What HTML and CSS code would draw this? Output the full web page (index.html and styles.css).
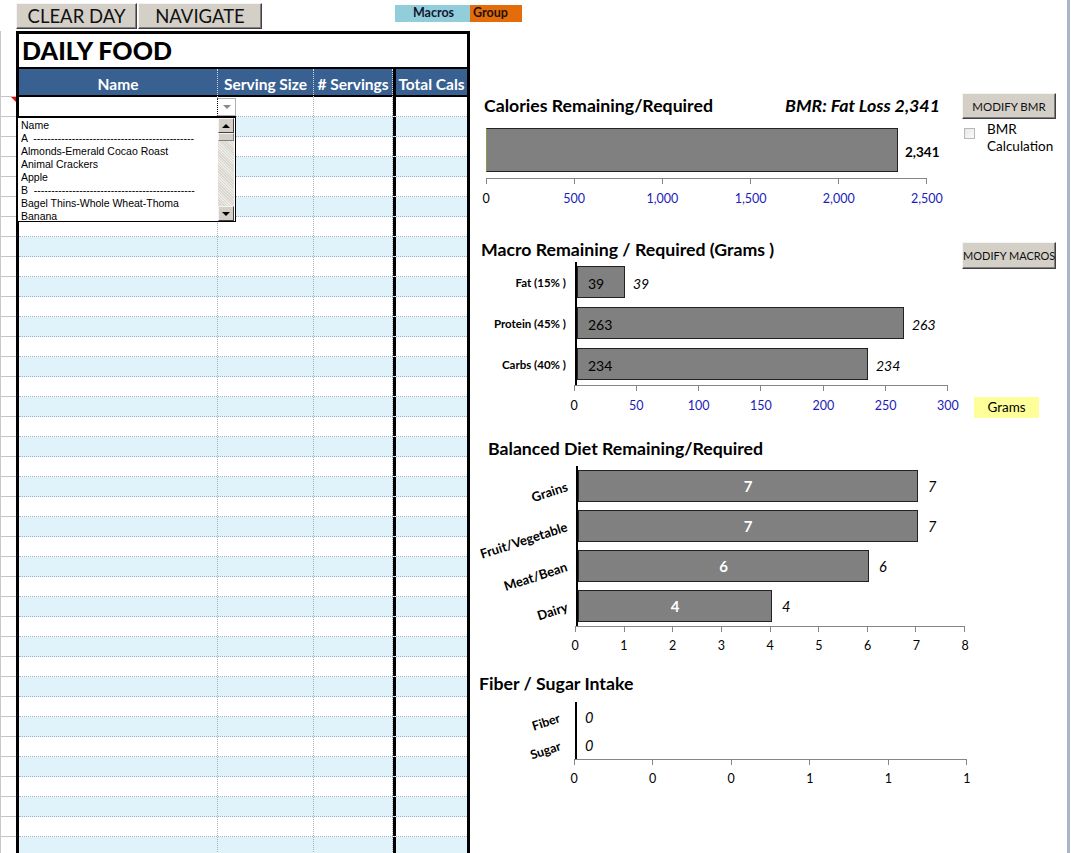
FILE: index.html
```html
<!DOCTYPE html>
<html>
<head>
<meta charset="utf-8">
<title>Daily Food</title>
<link rel="stylesheet" href="styles.css">
</head>
<body>
<div class="sheet">
  <div class="toolbar">
    <button class="xbtn btn-clear">CLEAR DAY</button>
    <button class="xbtn btn-nav">NAVIGATE</button>
    <div class="tags"><span class="tag tag-macros">Macros</span><span class="tag tag-group">Group</span></div>
  </div>
  <div class="main">
    <div class="left">
      <div class="gutter">
        <div class="g g-first"></div><div class="g"></div><div class="g"></div><div class="g"></div><div class="g"></div><div class="g"></div><div class="g"></div><div class="g"></div><div class="g"></div><div class="g"></div>
        <div class="g"></div><div class="g"></div><div class="g"></div><div class="g"></div><div class="g"></div><div class="g"></div><div class="g"></div><div class="g"></div><div class="g"></div><div class="g"></div>
        <div class="g"></div><div class="g"></div><div class="g"></div><div class="g"></div><div class="g"></div><div class="g"></div><div class="g"></div><div class="g"></div><div class="g"></div><div class="g"></div>
        <div class="g"></div><div class="g"></div><div class="g"></div><div class="g"></div><div class="g"></div><div class="g"></div><div class="g"></div><div class="g"></div>
      </div>
      <div class="food">
        <div class="food-title">DAILY FOOD</div>
        <div class="food-head">
          <div class="hc">Name</div>
          <div class="hc">Serving Size</div>
          <div class="hc"># Servings</div>
          <div class="hc hc-total">Total Cals</div>
        </div>
        <div class="food-body">
          <div class="row"><div class="c"></div><div class="c"></div><div class="c"></div><div class="c c-total"></div></div>
          <div class="row"><div class="c"></div><div class="c"></div><div class="c"></div><div class="c c-total"></div></div>
          <div class="row"><div class="c"></div><div class="c"></div><div class="c"></div><div class="c c-total"></div></div>
          <div class="row"><div class="c"></div><div class="c"></div><div class="c"></div><div class="c c-total"></div></div>
          <div class="row"><div class="c"></div><div class="c"></div><div class="c"></div><div class="c c-total"></div></div>
          <div class="row"><div class="c"></div><div class="c"></div><div class="c"></div><div class="c c-total"></div></div>
          <div class="row"><div class="c"></div><div class="c"></div><div class="c"></div><div class="c c-total"></div></div>
          <div class="row"><div class="c"></div><div class="c"></div><div class="c"></div><div class="c c-total"></div></div>
          <div class="row"><div class="c"></div><div class="c"></div><div class="c"></div><div class="c c-total"></div></div>
          <div class="row"><div class="c"></div><div class="c"></div><div class="c"></div><div class="c c-total"></div></div>
          <div class="row"><div class="c"></div><div class="c"></div><div class="c"></div><div class="c c-total"></div></div>
          <div class="row"><div class="c"></div><div class="c"></div><div class="c"></div><div class="c c-total"></div></div>
          <div class="row"><div class="c"></div><div class="c"></div><div class="c"></div><div class="c c-total"></div></div>
          <div class="row"><div class="c"></div><div class="c"></div><div class="c"></div><div class="c c-total"></div></div>
          <div class="row"><div class="c"></div><div class="c"></div><div class="c"></div><div class="c c-total"></div></div>
          <div class="row"><div class="c"></div><div class="c"></div><div class="c"></div><div class="c c-total"></div></div>
          <div class="row"><div class="c"></div><div class="c"></div><div class="c"></div><div class="c c-total"></div></div>
          <div class="row"><div class="c"></div><div class="c"></div><div class="c"></div><div class="c c-total"></div></div>
          <div class="row"><div class="c"></div><div class="c"></div><div class="c"></div><div class="c c-total"></div></div>
          <div class="row"><div class="c"></div><div class="c"></div><div class="c"></div><div class="c c-total"></div></div>
          <div class="row"><div class="c"></div><div class="c"></div><div class="c"></div><div class="c c-total"></div></div>
          <div class="row"><div class="c"></div><div class="c"></div><div class="c"></div><div class="c c-total"></div></div>
          <div class="row"><div class="c"></div><div class="c"></div><div class="c"></div><div class="c c-total"></div></div>
          <div class="row"><div class="c"></div><div class="c"></div><div class="c"></div><div class="c c-total"></div></div>
          <div class="row"><div class="c"></div><div class="c"></div><div class="c"></div><div class="c c-total"></div></div>
          <div class="row"><div class="c"></div><div class="c"></div><div class="c"></div><div class="c c-total"></div></div>
          <div class="row"><div class="c"></div><div class="c"></div><div class="c"></div><div class="c c-total"></div></div>
          <div class="row"><div class="c"></div><div class="c"></div><div class="c"></div><div class="c c-total"></div></div>
          <div class="row"><div class="c"></div><div class="c"></div><div class="c"></div><div class="c c-total"></div></div>
          <div class="row"><div class="c"></div><div class="c"></div><div class="c"></div><div class="c c-total"></div></div>
          <div class="row"><div class="c"></div><div class="c"></div><div class="c"></div><div class="c c-total"></div></div>
          <div class="row"><div class="c"></div><div class="c"></div><div class="c"></div><div class="c c-total"></div></div>
          <div class="row"><div class="c"></div><div class="c"></div><div class="c"></div><div class="c c-total"></div></div>
          <div class="row"><div class="c"></div><div class="c"></div><div class="c"></div><div class="c c-total"></div></div>
          <div class="row"><div class="c"></div><div class="c"></div><div class="c"></div><div class="c c-total"></div></div>
          <div class="row"><div class="c"></div><div class="c"></div><div class="c"></div><div class="c c-total"></div></div>
          <div class="row"><div class="c"></div><div class="c"></div><div class="c"></div><div class="c c-total"></div></div>
          <div class="row"><div class="c"></div><div class="c"></div><div class="c"></div><div class="c c-total"></div></div>
        </div>
        <div class="cell-arrow"><span class="tri-down"></span></div>
        <div class="dropdown">
          <div class="dd-list">
            <div class="dd-item">Name</div>
            <div class="dd-item">A &nbsp;----------------------------------------------</div>
            <div class="dd-item">Almonds-Emerald Cocao Roast</div>
            <div class="dd-item">Animal Crackers</div>
            <div class="dd-item">Apple</div>
            <div class="dd-item">B &nbsp;----------------------------------------------</div>
            <div class="dd-item">Bagel Thins-Whole Wheat-Thoma</div>
            <div class="dd-item">Banana</div>
          </div>
          <div class="dd-scroll">
            <div class="sb-btn"><span class="tri-up-b"></span></div>
            <div class="sb-thumb"></div>
            <div class="sb-track"></div>
            <div class="sb-btn"><span class="tri-down-b"></span></div>
          </div>
        </div>
      </div>
    </div>

    <div class="right">
      <section class="sec sec-cal">
        <div class="sec-main">
          <div class="title-row cal-title">
            <h2 class="ctitle">Calories Remaining/Required</h2>
            <span class="bmr">BMR: Fat Loss 2,341</span>
          </div>
          <div class="cal-plot">
            <div class="bar bar-cal" style="width:412px"></div>
            <span class="cal-val">2,341</span>
          </div>
          <div class="axis axis-cal"><i></i><i></i><i></i><i></i><i></i><i></i></div>
          <div class="axis-labels al-cal">
            <span class="al al-black">0</span><span class="al">500</span><span class="al">1,000</span><span class="al">1,500</span><span class="al">2,000</span><span class="al">2,500</span>
          </div>
        </div>
        <div class="sec-side">
          <button class="mbtn">MODIFY BMR</button>
          <div class="chk"><span class="chk-box"></span><span class="chk-text">BMR<br>Calculation</span></div>
        </div>
      </section>

      <section class="sec sec-macro">
        <div class="sec-main">
          <div class="title-row macro-title"><h2 class="ctitle">Macro Remaining / Required (Grams )</h2></div>
          <div class="hchart macro-chart">
            <div class="cats">
              <div class="cat">Fat (15% )</div>
              <div class="cat">Protein (45% )</div>
              <div class="cat">Carbs (40% )</div>
            </div>
            <div class="plot">
              <div class="brow"><div class="bar" style="width:48px"><span class="bin">39</span></div><span class="bout">39</span></div>
              <div class="brow"><div class="bar" style="width:327px"><span class="bin">263</span></div><span class="bout">263</span></div>
              <div class="brow"><div class="bar" style="width:291px"><span class="bin">234</span></div><span class="bout">234</span></div>
            </div>
            <div class="xaxis">
              <div class="axis axis-macro"><i></i><i></i><i></i><i></i><i></i><i></i><i></i></div>
              <div class="axis-labels al-macro">
                <span class="al al-black">0</span><span class="al">50</span><span class="al">100</span><span class="al">150</span><span class="al">200</span><span class="al">250</span><span class="al">300</span>
              </div>
            </div>
          </div>
        </div>
        <div class="sec-side">
          <button class="mbtn mbtn-macros">MODIFY MACROS</button>
          <div class="grams">Grams</div>
        </div>
      </section>

      <section class="sec sec-bal">
        <div class="sec-main">
          <div class="title-row bal-title"><h2 class="ctitle">Balanced Diet Remaining/Required</h2></div>
          <div class="hchart bal-chart">
            <div class="cats">
              <div class="cat cat-rot"><span>Grains</span></div>
              <div class="cat cat-rot"><span>Fruit/Vegetable</span></div>
              <div class="cat cat-rot"><span>Meat/Bean</span></div>
              <div class="cat cat-rot"><span>Dairy</span></div>
            </div>
            <div class="plot">
              <div class="brow"><div class="bar bar-c" style="width:340px"><span class="bin-w">7</span></div><span class="bout">7</span></div>
              <div class="brow"><div class="bar bar-c" style="width:340px"><span class="bin-w">7</span></div><span class="bout">7</span></div>
              <div class="brow"><div class="bar bar-c" style="width:291px"><span class="bin-w">6</span></div><span class="bout">6</span></div>
              <div class="brow"><div class="bar bar-c" style="width:194px"><span class="bin-w">4</span></div><span class="bout">4</span></div>
            </div>
            <div class="xaxis">
              <div class="axis axis-bal"><i></i><i></i><i></i><i></i><i></i><i></i><i></i><i></i><i></i></div>
              <div class="axis-labels al-bal">
                <span class="al">0</span><span class="al">1</span><span class="al">2</span><span class="al">3</span><span class="al">4</span><span class="al">5</span><span class="al">6</span><span class="al">7</span><span class="al">8</span>
              </div>
            </div>
          </div>
        </div>
      </section>

      <section class="sec sec-fib">
        <div class="sec-main">
          <div class="title-row fib-title"><h2 class="ctitle">Fiber / Sugar Intake</h2></div>
          <div class="hchart fib-chart">
            <div class="cats">
              <div class="cat cat-rot"><span>Fiber</span></div>
              <div class="cat cat-rot"><span>Sugar</span></div>
            </div>
            <div class="plot">
              <div class="brow"><span class="bout bout-zero">0</span></div>
              <div class="brow"><span class="bout bout-zero">0</span></div>
            </div>
            <div class="xaxis">
              <div class="axis axis-fib"><i></i><i></i><i></i><i></i><i></i><i></i></div>
              <div class="axis-labels al-fib">
                <span class="al">0</span><span class="al">0</span><span class="al">0</span><span class="al">1</span><span class="al">1</span><span class="al">1</span>
              </div>
            </div>
          </div>
        </div>
      </section>
    </div>
  </div>
</div>
</body>
</html>
```

FILE: styles.css
```css
html, body {
  margin: 0;
  padding: 0;
  background: #fff;
  overflow: hidden;
}
body {
  font-family: "Lato", "Liberation Sans", sans-serif;
  color: #000;
}
.sheet {
  width: 1067px;
  height: 853px;
  border-right: 3px solid #a8b6ca;
  overflow: hidden;
}

/* ---------- toolbar ---------- */
.toolbar {
  height: 31px;
  box-sizing: border-box;
  padding: 3px 0 0 16px;
  display: flex;
  align-items: flex-start;
}
.xbtn {
  height: 26px;
  padding: 0;
  margin: 0;
  background: #d4d0c8;
  border: 1px solid;
  border-color: #f4f4f4 #404040 #404040 #f4f4f4;
  box-shadow: inset -1px -1px 0 #808080;
  font-family: "Lato", "Liberation Sans", sans-serif;
  font-size: 18.5px;
  color: #111;
  line-height: 24px;
}
.btn-clear { width: 121px; }
.btn-nav { width: 124px; margin-left: 1px; }
.tags {
  display: flex;
  margin-left: 133px;
  margin-top: 2px;
  height: 17px;
}
.tag {
  font-size: 12.5px;
  font-weight: 700;
  line-height: 16px;
  height: 17px;
}
.tag-macros {
  width: 75px;
  background: #92cddc;
  color: #101830;
  text-align: center;
  box-sizing: border-box;
  padding-left: 2px;
}
.tag-group {
  width: 52px;
  background: #e46c0a;
  color: #1e1208;
  padding-left: 3px;
  box-sizing: border-box;
}

/* ---------- main ---------- */
.main {
  display: flex;
  height: 822px;
}
.left {
  display: flex;
  width: 470px;
  flex: none;
}
.gutter {
  width: 16px;
  padding-top: 66px;
  box-sizing: border-box;
  border-left: 1px solid #c8c8c8;
}
.g {
  height: 20px;
  box-sizing: border-box;
  border-bottom: 1px solid #c4c4c4;
}
.g-first {
  position: relative;
  box-shadow: 0 -1px 0 #c4c4c4;
}
.g-first::after {
  content: "";
  position: absolute;
  right: 0;
  top: 0;
  border-top: 5px solid #e01010;
  border-left: 5px solid transparent;
}

.food {
  position: relative;
  width: 454px;
  box-sizing: border-box;
  border: 3px solid #000;
  border-bottom: none;
}
.food-title {
  height: 35px;
  box-sizing: border-box;
  border-bottom: 2px solid #000;
  padding-left: 3px;
  font-size: 25px;
  font-weight: 900;
  line-height: 33px;
  letter-spacing: 0.1px;
}
.food-head {
  display: grid;
  grid-template-columns: 199px 96px 79px 74px;
  height: 28px;
  box-sizing: border-box;
  background: #386192;
  border-bottom: 2px solid #000;
}
.hc {
  color: #fff;
  font-weight: 700;
  font-size: 15.5px;
  line-height: 26px;
  padding-top: 2px;
  box-sizing: border-box;
  text-align: center;
  white-space: nowrap;
  border-right: 1px dotted #c9d5e6;
}
.hc-total {
  border-right: none;
  border-left: 3px solid #000;
}
.food-body {
  display: flex;
  flex-direction: column;
}
.row {
  display: grid;
  grid-template-columns: 199px 96px 79px 74px;
  height: 20px;
  box-sizing: border-box;
  border-bottom: 1px dotted #9fb3c2;
}
.row:nth-child(even) {
  background: #e0f3fa;
}
.c {
  border-right: 1px dotted #9fb3c2;
}
.c-total {
  border-right: none;
  border-left: 3px solid #000;
}

/* in-cell dropdown arrow */
.cell-arrow {
  position: absolute;
  left: 198px;
  top: 64px;
  width: 19px;
  height: 18px;
  box-sizing: border-box;
  background: #fff;
  border: 1px solid #b0b0b0;
  border-left: 1px dotted #000;
  display: flex;
  align-items: center;
  justify-content: center;
}
.tri-down {
  width: 0;
  height: 0;
  border-left: 4px solid transparent;
  border-right: 4px solid transparent;
  border-top: 4px solid #8a8a8a;
}

/* dropdown list */
.dropdown {
  position: absolute;
  left: -2px;
  top: 82px;
  width: 219px;
  height: 106px;
  box-sizing: border-box;
  background: #fff;
  border: 1px solid #000;
  border-top: 2px solid #000;
  display: flex;
}
.dd-list {
  flex: 1;
  padding: 1px 0 0 3px;
  overflow: hidden;
  font-family: "Liberation Sans", Arial, sans-serif;
  font-size: 10.5px;
  line-height: 13px;
  color: #000;
}
.dd-item {
  white-space: nowrap;
  overflow: hidden;
  width: 182px;
}
.dd-scroll {
  width: 16px;
  margin-right: 1px;
  display: flex;
  flex-direction: column;
}
.sb-btn {
  height: 15px;
  box-sizing: border-box;
  background: #d4d0c8;
  border: 1px solid;
  border-color: #f4f4f4 #404040 #404040 #f4f4f4;
  display: flex;
  align-items: center;
  justify-content: center;
}
.tri-up-b {
  width: 0;
  height: 0;
  border-left: 4px solid transparent;
  border-right: 4px solid transparent;
  border-bottom: 4px solid #000;
}
.tri-down-b {
  width: 0;
  height: 0;
  border-left: 4px solid transparent;
  border-right: 4px solid transparent;
  border-top: 4px solid #000;
}
.sb-thumb {
  height: 8px;
  box-sizing: border-box;
  background: #d4d0c8;
  border: 1px solid;
  border-color: #f4f4f4 #808080 #808080 #f4f4f4;
}
.sb-track {
  flex: 1;
  background-color: #ecebe6;
  background-image: repeating-linear-gradient(45deg, #d8d6cf 0 1px, transparent 1px 2px);
}

/* ---------- right pane ---------- */
.right {
  flex: 1;
  display: flex;
  flex-direction: column;
  padding-top: 61px;
}
.sec {
  display: flex;
  flex: none;
}
.sec-main {
  width: 492px;
  flex: none;
}
.sec-side {
  width: 94px;
  display: flex;
  flex-direction: column;
}
.sec-cal { height: 146px; }
.sec-macro { height: 192px; }
.sec-bal { height: 234px; }
.sec-fib { height: 130px; }

.title-row {
  display: flex;
  align-items: center;
  justify-content: space-between;
  box-sizing: border-box;
}
.ctitle {
  margin: 0;
  font-size: 17.7px;
  font-weight: 700;
  white-space: nowrap;
  color: #000;
}
.cal-title { height: 26px; padding: 0 22px 0 14px; }
.macro-title { height: 22px; padding-left: 11px; }
.bal-title { height: 36px; padding-left: 18px; }
.fib-title { height: 38px; padding-left: 9px; }

.bmr {
  font-size: 17.8px;
  font-weight: 700;
  font-style: italic;
  white-space: nowrap;
}

.bar {
  height: 32px;
  box-sizing: border-box;
  background: #808080;
  border: 1px solid #222;
  display: flex;
  align-items: center;
  flex: none;
}
.bar-cal {
  height: 44px;
  border-left: 1px solid #8c9a4a;
}
.cal-plot {
  margin-top: 10px;
  height: 44px;
  padding-left: 16px;
  display: flex;
  align-items: center;
}
.cal-val {
  margin-left: 7px;
  font-size: 13.5px;
  font-weight: 700;
  padding-top: 3px;
}

/* axes */
.axis {
  height: 6px;
  box-sizing: border-box;
  border-top: 1px solid #868686;
  display: flex;
  justify-content: space-between;
}
.axis i {
  display: block;
  width: 1px;
  height: 5px;
  background: #868686;
}
.axis-labels {
  display: flex;
  justify-content: space-between;
  height: 15px;
  font-size: 12.5px;
  line-height: 15px;
  color: #000;
}
.al {
  width: 0;
  display: flex;
  justify-content: center;
  white-space: nowrap;
}
.axis-cal {
  width: 441px;
  margin: 6px 0 0 16px;
}
.al-cal {
  width: 441px;
  margin: 7px 0 0 16px;
  color: #1c1cb8;
}
.al-black { color: #000; }

.hchart {
  display: grid;
  grid-template-rows: auto auto;
}
.cats {
  display: flex;
  flex-direction: column;
  box-sizing: border-box;
}
.cat {
  display: flex;
  align-items: center;
  justify-content: flex-end;
  white-space: nowrap;
  font-weight: 700;
}
.plot {
  display: flex;
  flex-direction: column;
  border-left: 2px solid #000;
  box-sizing: border-box;
}
.brow {
  display: flex;
  align-items: center;
}
.bin {
  padding-left: 10px;
  padding-top: 3px;
  font-size: 14px;
}
.bar-c {
  justify-content: center;
}
.bin-w {
  color: #fff;
  font-weight: 700;
  font-size: 15px;
}
.bout {
  font-style: italic;
  font-size: 14px;
  margin-left: 8px;
}
.xaxis {
  grid-column: 2;
  margin-left: -1px;
}

/* macro chart */
.macro-chart {
  margin-top: 2px;
  grid-template-columns: 105px auto;
}
.macro-chart .cats,
.macro-chart .plot {
  padding: 4px 0 5px;
  gap: 9px;
}
.macro-chart .cat {
  height: 32px;
  padding-right: 9px;
  font-size: 11.5px;
}
.macro-chart .brow { height: 32px; }
.macro-chart .bout { padding-top: 3px; }
.axis-macro { width: 374px; }
.al-macro {
  width: 374px;
  margin-top: 7px;
  color: #1c1cb8;
}

/* balanced chart */
.bal-chart {
  grid-template-columns: 106px auto;
}
.bal-chart .cats,
.bal-chart .plot {
  padding: 4px 0 4px;
  gap: 8px;
}
.bal-chart .cat {
  height: 32px;
  padding-right: 9px;
  font-size: 13px;
}
.bal-chart .brow { height: 32px; }
.bal-chart .bout { margin-left: 10px; font-size: 14.5px; }
.cat-rot span {
  display: inline-block;
  transform: rotate(-18deg);
  transform-origin: right center;
}
.axis-bal { width: 390px; }
.al-bal {
  width: 390px;
  margin-top: 6px;
}

/* fiber chart */
.fib-chart {
  grid-template-columns: 105px auto;
}
.fib-chart .cats,
.fib-chart .plot {
  padding-top: 1px;
  height: 57px;
}
.fib-chart .cat {
  height: 28px;
  padding-right: 15px;
  font-size: 12.5px;
}
.fib-chart .brow { height: 28px; }
.bout-zero { font-size: 14.5px; margin-left: 8px; }
.axis-fib { width: 393px; }
.al-fib {
  width: 393px;
  margin-top: 6px;
}

/* side controls */
.mbtn {
  width: 94px;
  height: 26px;
  padding: 0;
  background: #d4d0c8;
  border: 1px solid;
  border-color: #f4f4f4 #404040 #404040 #f4f4f4;
  box-shadow: inset -1px -1px 0 #808080;
  font-family: "Lato", "Liberation Sans", sans-serif;
  font-size: 11.5px;
  color: #111;
  white-space: nowrap;
}
.sec-cal .mbtn { margin-top: 1px; }
.mbtn-macros { margin-top: 4px; height: 27px; font-size: 11px; }
.chk {
  display: flex;
  align-items: flex-start;
  margin-top: 2px;
}
.chk-box {
  width: 11px;
  height: 11px;
  box-sizing: border-box;
  margin: 7px 0 0 2px;
  border: 1px solid #b8b8b8;
  background: linear-gradient(135deg, #e8e8e8, #fafafa);
  flex: none;
}
.chk-text {
  margin-left: 12px;
  font-size: 13.5px;
  line-height: 17px;
  white-space: nowrap;
}
.grams {
  margin: 128px 0 0 12px;
  width: 65px;
  height: 21px;
  background: #ffff99;
  font-size: 13.5px;
  line-height: 21px;
  text-align: center;
}
```
